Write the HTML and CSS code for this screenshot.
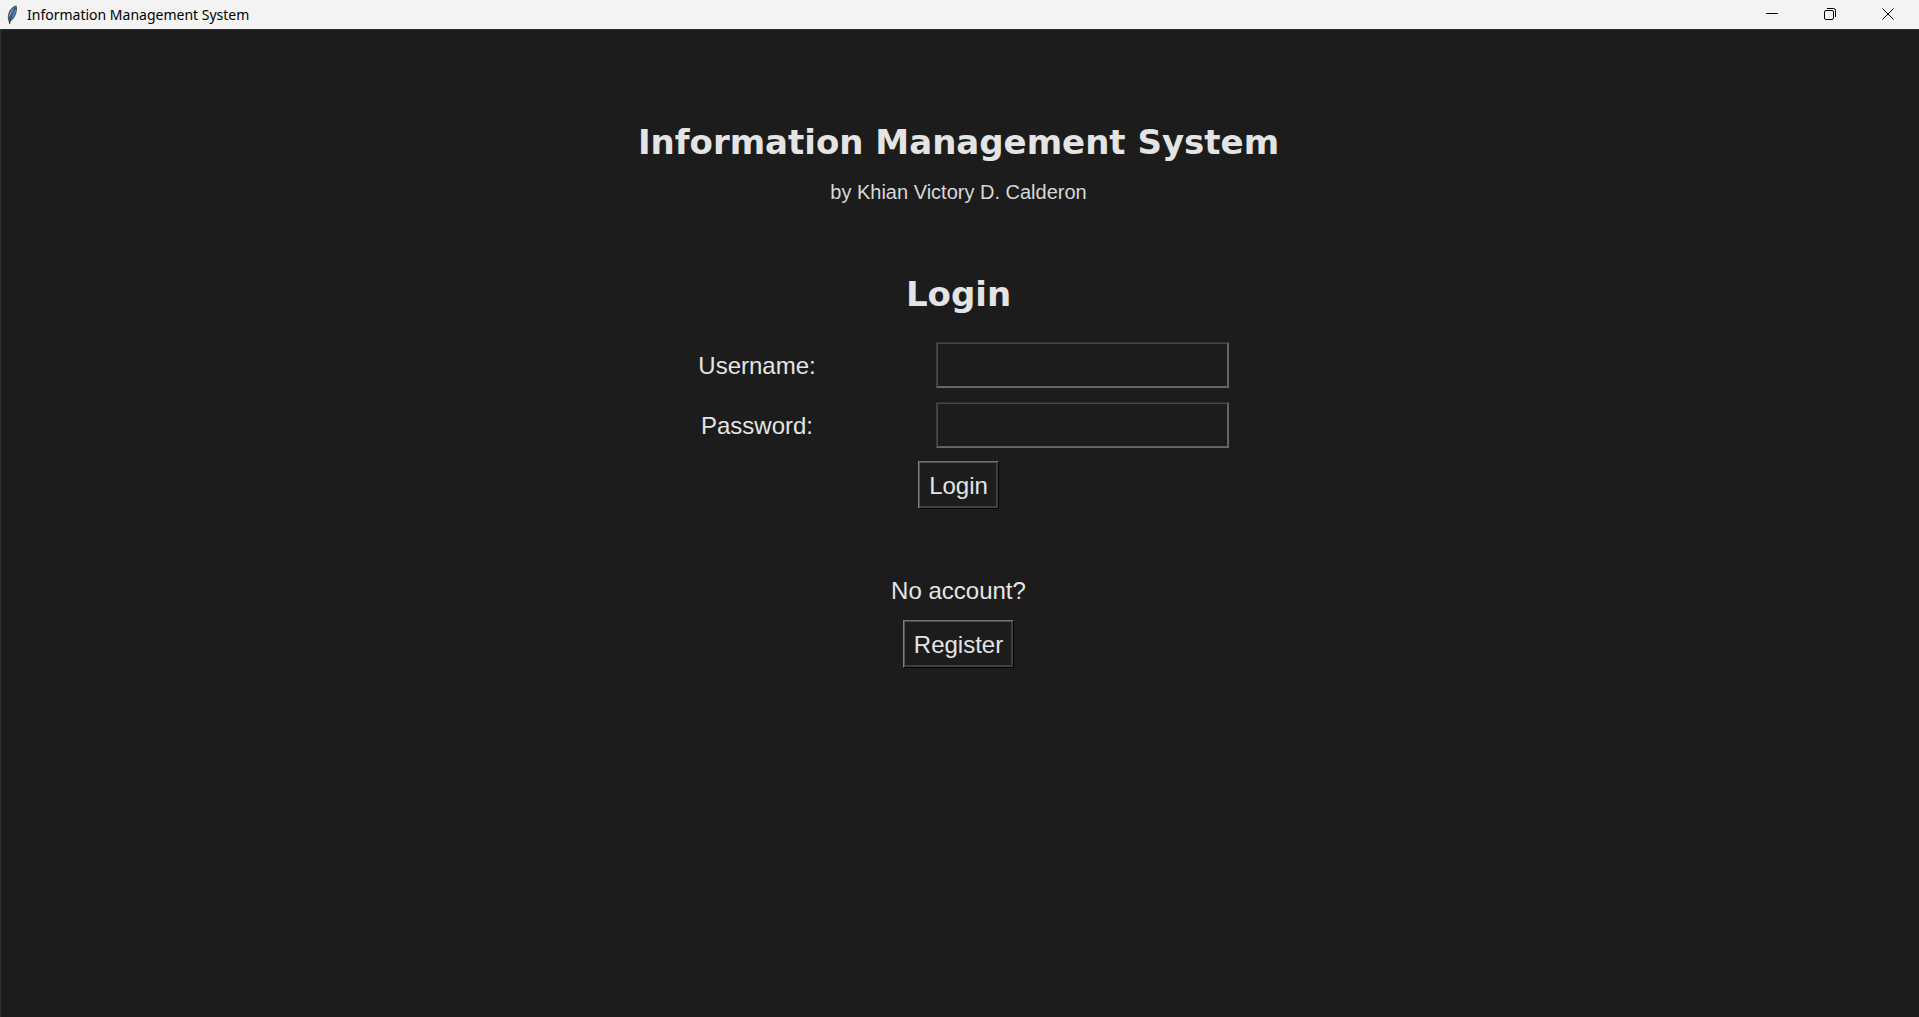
FILE: index.html
```html
<!DOCTYPE html>
<html lang="en">
<head>
<meta charset="utf-8">
<title>Information Management System</title>
<link rel="stylesheet" href="styles.css">
</head>
<body>
<header class="titlebar">
  <svg class="feather" viewBox="0 0 12 20" aria-hidden="true">
    <path d="M10.500 0.500C7 1 4 4 2.500 8C1.500 11 1.500 14 2.500 16L3.500 19.500L4.500 16C7 15 9 12 10 9C11 6 11.500 3 10.500 0.500Z" fill="#4a5866"/>
    <path d="M10 2C7.500 5 5 9 4 14.500C7 13.500 9 9 10 5Z" fill="#4f8fdf"/>
    <path d="M8.500 2.500C5.500 5 3 9 2.800 12.500C4.500 9 6.500 6 8.500 2.500Z" fill="#a9bccd"/>
    <path d="M9.500 3C6.500 8 4.500 13 3.500 19" fill="none" stroke="#1b2a3c" stroke-width="0.800"/>
  </svg>
  <span class="titlebar-text">Information Management System</span>
  <div class="window-controls">
    <button type="button" class="window-button" aria-label="Minimize">
      <svg viewBox="0 0 12 12"><path d="M0 5.500H12"/></svg>
    </button>
    <button type="button" class="window-button" aria-label="Restore">
      <svg viewBox="0 0 12 12"><rect x="0.500" y="2.500" width="9" height="9" rx="1.500"/><path d="M3 0.500H9.500Q11.500 0.500 11.500 2.500V9"/></svg>
    </button>
    <button type="button" class="window-button" aria-label="Close">
      <svg viewBox="0 0 12 12"><path d="M0.500 0.500L11.500 11.500M11.500 0.500L0.500 11.500"/></svg>
    </button>
  </div>
</header>
<main class="content">
  <h1 class="heading">Information Management System</h1>
  <p class="byline">by Khian Victory D. Calderon</p>
  <form class="login">
    <h2 class="heading">Login</h2>
    <div class="fields">
      <label for="username">Username:</label>
      <input class="entry" id="username" type="text">
      <label for="password">Password:</label>
      <input class="entry" id="password" type="password">
    </div>
    <button type="button" class="button">Login</button>
  </form>
  <section class="register">
    <p class="prompt">No account?</p>
    <button type="button" class="button">Register</button>
  </section>
</main>
</body>
</html>
```
FILE: styles.css
```css
* {
  box-sizing: border-box;
}

body {
  margin: 0;
  min-height: 100vh;
  display: flex;
  flex-direction: column;
  background: #1c1c1c;
  color: #e4e4e4;
  font-family: "Liberation Sans", Arial, sans-serif;
  font-size: 24px;
  line-height: 30px;
}

h1, h2, p {
  margin: 0;
}

.titlebar {
  display: flex;
  align-items: center;
  height: 29px;
  padding: 0 2px 0 6px;
  background: #f3f3f3;
  color: #000;
}

.feather {
  width: 12px;
  height: 20px;
}

.titlebar-text {
  margin-left: 9px;
  font-family: "Noto Sans", "Segoe UI", sans-serif;
  font-size: 14px;
  line-height: 20px;
}

.window-controls {
  display: flex;
  height: 100%;
  margin-left: auto;
}

.window-button {
  display: flex;
  align-items: center;
  justify-content: center;
  width: 58px;
  padding: 0 0 1px;
  border: 0;
  background: none;
}

.window-button svg {
  width: 12px;
  height: 12px;
  fill: none;
  stroke: #000;
}

.content {
  flex: 1;
  display: flex;
  flex-direction: column;
  align-items: center;
  padding: 92px 3px 0 0;
  border-top: 1px solid #2c2f2e;
  border-left: 1px solid #303030;
}

.heading {
  font-family: "DejaVu Sans", Verdana, sans-serif;
  font-size: 34px;
  font-weight: bold;
  line-height: 40px;
}

.byline {
  margin-top: 18px;
  color: #d8d8d8;
  font-size: 20px;
  line-height: 24px;
}

.login {
  display: flex;
  flex-direction: column;
  align-items: center;
  margin-top: 70px;
}

.fields {
  display: grid;
  grid-template-columns: 247px 403px;
  gap: 14px 0;
  place-items: center;
  margin: 28px 0 13px;
}

.fields label {
  padding-top: 2px;
}

.entry {
  width: 293px;
  height: 46px;
  padding: 0 8px;
  border: 1px solid;
  border-color: #303030 #686868 #686868 #3c3c3c;
  background: #1c1c1c;
  box-shadow: inset 1px 1px #484848, inset -1px -1px #606060;
  color: inherit;
  font: inherit;
}

.button {
  height: 48px;
  padding: 2px 10px 0;
  border: 1px solid;
  border-color: #707070 #000 #000 #808080;
  background: #1c1c1c;
  box-shadow: inset 1px 1px #505050, inset -2px -2px #404040;
  color: inherit;
  font: inherit;
}

.register {
  display: flex;
  flex-direction: column;
  align-items: center;
  gap: 14px;
  margin-top: 67px;
}
```
